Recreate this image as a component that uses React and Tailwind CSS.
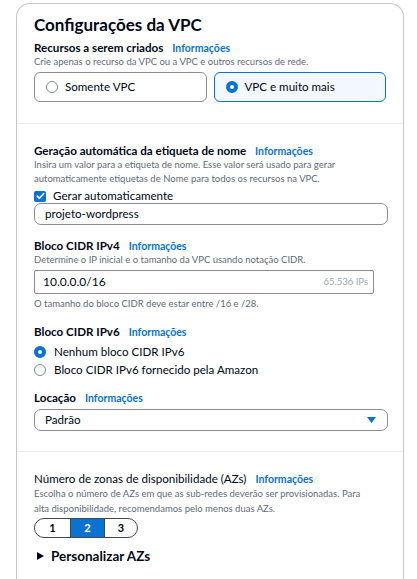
import React from 'react';

const font = "font-['Lato','Liberation_Sans',sans-serif]";

const Info = () => (
  <a className="ml-[9px] text-[10.5px] font-bold text-[#0972d3]">Informações</a>
);

const Label = ({ children, className = '' }) => (
  <div className={`flex items-baseline leading-[14px] ${className}`}>
    <span className="text-[11.6px] font-bold text-[#000716]">{children}</span>
    <Info />
  </div>
);

const Radio = ({ checked }) =>
  checked ? (
    <span className="inline-block h-[12px] w-[12px] shrink-0 rounded-full border-[4px] border-[#0972d3] bg-white" />
  ) : (
    <span className="inline-block h-[12px] w-[12px] shrink-0 rounded-full border-[1.5px] border-[#7d8998] bg-white" />
  );

export default function App() {
  return (
    <div className={`min-h-[579px] bg-white pt-[3px] text-[#000716] ${font}`}>
      <div className="ml-[16px] w-[388px] rounded-t-[14px] border-x border-t border-[#c6c6cd] pb-[14px]">
        {/* recursos */}
        <section className="px-[17px] pt-[10px] pb-[21px]">
          <h2 className="text-[17px] font-bold leading-[22px]">Configurações da VPC</h2>
          <Label className="mt-[5px]">Recursos a serem criados</Label>
          <p className="text-[9.5px] leading-[14px] text-[#5f6b7a]">
            Crie apenas o recurso da VPC ou a VPC e outros recursos de rede.
          </p>
          <div className="mt-[3px] grid grid-cols-2 gap-[7px]">
            <div className="flex h-[30px] items-center gap-[7px] rounded-[6px] border border-[#8c8c94] px-[11px]">
              <Radio />
              <span className="text-[11.6px]">Somente VPC</span>
            </div>
            <div className="flex h-[30px] items-center gap-[7px] rounded-[6px] border border-[#0972d3] bg-[#f2f8fd] px-[11px]">
              <Radio checked />
              <span className="text-[11.6px]">VPC e muito mais</span>
            </div>
          </div>
        </section>

        {/* nome, cidr, locação */}
        <section className="border-t border-[#e9ebed] px-[17px] pt-[20px] pb-[20px]">
          <Label>Geração automática da etiqueta de nome</Label>
          <p className="whitespace-nowrap text-[9.5px] leading-[13.5px] text-[#5f6b7a]">
            Insira um valor para a etiqueta de nome. Esse valor será usado para gerar
            <br />
            automaticamente etiquetas de Nome para todos os recursos na VPC.
          </p>
          <div className="mt-[4px] flex h-[14px] items-center gap-[7px]">
            <span className="flex h-[11px] w-[12px] items-center justify-center rounded-[2px] bg-[#0972d3]">
              <svg width="9" height="8" viewBox="0 0 9 8" fill="none">
                <path d="M1.2 4.2 L3.5 6.3 L7.8 1.5" stroke="white" strokeWidth="1.6" strokeLinecap="round" strokeLinejoin="round" />
              </svg>
            </span>
            <span className="text-[11.6px]">Gerar automaticamente</span>
          </div>
          <div className="flex h-[22px] w-[354px] items-center rounded-[7px] border border-[#8c8c94] px-[10px] text-[11.6px]">
            projeto-wordpress
          </div>

          <Label className="mt-[14px]">Bloco CIDR IPv4</Label>
          <p className="text-[9.5px] leading-[13px] text-[#5f6b7a]">
            Determine o IP inicial e o tamanho da VPC usando notação CIDR.
          </p>
          <div className="mt-[4px] flex h-[24px] w-[340px] items-center justify-between rounded-[2px] border border-[#8c8c94] pl-[8px] pr-[5px]">
            <span className="text-[12px]">10.0.0.0/16</span>
            <span className="text-[9.5px] text-[#9ba7b6]">65.536 IPs</span>
          </div>
          <p className="mt-[3px] text-[9.5px] leading-[13px] text-[#5f6b7a]">
            O tamanho do bloco CIDR deve estar entre /16 e /28.
          </p>

          <Label className="mt-[15px]">Bloco CIDR IPv6</Label>
          <div className="mt-[4px] flex flex-col">
            <div className="flex h-[18px] items-center gap-[8px]">
              <Radio checked />
              <span className="text-[11.6px]">Nenhum bloco CIDR IPv6</span>
            </div>
            <div className="flex h-[18px] items-center gap-[8px]">
              <Radio />
              <span className="text-[11.6px]">Bloco CIDR IPv6 fornecido pela Amazon</span>
            </div>
          </div>

          <Label className="mt-[12px]">Locação</Label>
          <div className="mt-[4px] flex h-[22px] w-[354px] items-center justify-between rounded-[7px] border border-[#8c8c94] pl-[10px] pr-[11px]">
            <span className="text-[11.6px]">Padrão</span>
            <svg width="9" height="6" viewBox="0 0 9 6">
              <path d="M0 0 H9 L4.5 6 Z" fill="#0972d3" />
            </svg>
          </div>
        </section>

        {/* AZs */}
        <section className="border-t border-[#e9ebed] px-[17px] pt-[20px]">
          <div className="flex items-baseline leading-[14px]">
            <span className="text-[11.6px] text-[#000716]">Número de zonas de disponibilidade (AZs)</span>
            <Info />
          </div>
          <p className="whitespace-nowrap text-[9.5px] leading-[15px] text-[#5f6b7a]">
            Escolha o número de AZs em que as sub-redes deverão ser provisionadas. Para
            <br />
            alta disponibilidade, recomendamos pelo menos duas AZs.
          </p>
          <div className="mt-[2px] flex h-[20px] w-[104px] overflow-hidden rounded-full border border-[#424650] text-[11px] font-bold">
            <span className="flex w-[35px] items-center justify-center">1</span>
            <span className="flex w-[35px] items-center justify-center border-x border-[#424650] bg-[#0972d3] text-white">2</span>
            <span className="flex flex-1 items-center justify-center">3</span>
          </div>
          <div className="mt-[9px] flex h-[18px] items-center gap-[7px] pl-[3px]">
            <svg width="7" height="8" viewBox="0 0 7 8">
              <path d="M0 0 L7 4 L0 8 Z" fill="#000716" />
            </svg>
            <span className="text-[13.5px] font-bold">Personalizar AZs</span>
          </div>
        </section>
      </div>
    </div>
  );
}
